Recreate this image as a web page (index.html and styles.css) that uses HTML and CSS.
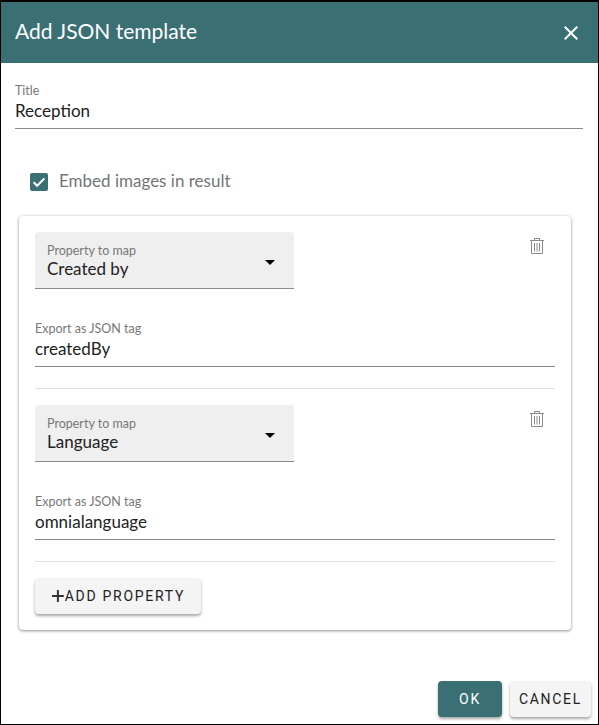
FILE: index.html
```html
<!DOCTYPE html>
<html lang="en">

<head>
  <meta charset="UTF-8">
  <title>Add JSON template</title>
  <link rel="stylesheet" href="styles.css">
</head>

<body>
  <div class="dialog">
    <div class="dialog-header">
      <span class="dialog-title">Add JSON template</span>
      <svg class="close-icon" viewBox="0 0 24 24" width="24" height="24">
        <path d="M19 6.41 17.59 5 12 10.59 6.41 5 5 6.41 10.59 12 5 17.59 6.41 19 12 13.41 17.59 19 19 17.59 13.41 12z" />
      </svg>
    </div>

    <div class="dialog-body">
      <div class="field title-field">
        <label>Title</label>
        <div class="value">Reception</div>
      </div>

      <div class="checkbox-row">
        <svg class="checkbox" viewBox="0 0 18 18" width="18" height="18">
          <rect width="18" height="18" rx="2" fill="#3a7074" />
          <path d="M3.6 9.2 7.2 12.8 14.4 5.4" fill="none" stroke="#fff" stroke-width="2" />
        </svg>
        <span>Embed images in result</span>
      </div>

      <div class="card">
        <div class="property">
          <div class="property-top">
            <div class="select">
              <div>
                <label>Property to map</label>
                <div class="value">Created by</div>
              </div>
              <span class="caret"></span>
            </div>
            <svg class="trash-icon" viewBox="0 0 16 18" width="16" height="18">
              <path d="M1 3.5H15M5.5 3.5V1.5H10.5V3.5M2.5 3.5V16.5H13.5V3.5M5.5 6V14.5M8 6V14.5M10.5 6V14.5" fill="none" stroke="#8a8a8a" stroke-width="1" />
            </svg>
          </div>
          <div class="field tag-field">
            <label>Export as JSON tag</label>
            <div class="value">createdBy</div>
          </div>
        </div>

        <div class="property">
          <div class="property-top">
            <div class="select">
              <div>
                <label>Property to map</label>
                <div class="value">Language</div>
              </div>
              <span class="caret"></span>
            </div>
            <svg class="trash-icon" viewBox="0 0 16 18" width="16" height="18">
              <path d="M1 3.5H15M5.5 3.5V1.5H10.5V3.5M2.5 3.5V16.5H13.5V3.5M5.5 6V14.5M8 6V14.5M10.5 6V14.5" fill="none" stroke="#8a8a8a" stroke-width="1" />
            </svg>
          </div>
          <div class="field tag-field">
            <label>Export as JSON tag</label>
            <div class="value">omnialanguage</div>
          </div>
        </div>

        <button class="btn btn-add">
          <svg viewBox="0 0 14 14" width="14" height="14">
            <path d="M1 7H13M7 1V13" fill="none" stroke="#333" stroke-width="2" />
          </svg>
          ADD PROPERTY
        </button>
      </div>
    </div>

    <div class="dialog-footer">
      <button class="btn btn-ok">OK</button>
      <button class="btn btn-cancel">CANCEL</button>
    </div>
  </div>
</body>

</html>
```

FILE: styles.css
```css
html,
body {
  margin: 0;
  height: 100%;
}

body {
  font-family: Lato, "Open Sans", sans-serif;
  color: #222;
  background-color: #fff;
}

.dialog {
  box-sizing: border-box;
  height: 725px;
  display: flex;
  flex-direction: column;
  border: 1px solid #000;
  border-top-width: 2px;
  overflow: hidden;
}

.dialog-header {
  display: flex;
  align-items: center;
  justify-content: space-between;
  height: 61px;
  padding: 0 15px 0 14px;
  background-color: #3a7074;
  color: #fff;
}

.dialog-title {
  font-size: 21px;
  line-height: 28px;
  margin-top: -3px;
}

.close-icon {
  fill: #fff;
}

.dialog-body {
  flex: 1;
  padding: 0 15px 0 14px;
}

label {
  display: block;
  font-size: 12.5px;
  line-height: 14px;
  color: #777;
}

.value {
  font-size: 17px;
  line-height: 26px;
  color: #222;
}

.select .value {
  line-height: 22px;
}

.field {
  border-bottom: 1px solid #8c8c8c;
}

.title-field {
  margin-top: 21px;
  padding-bottom: 4px;
}

.checkbox-row {
  display: flex;
  align-items: center;
  gap: 11px;
  margin: 44px 0 0 15px;
  height: 18px;
  font-size: 17px;
  line-height: 18px;
  color: #757575;
}

.checkbox-row span {
  margin-top: -2px;
}

.card {
  margin: 25px 12px 0 4px;
  padding: 16px;
  background-color: #fff;
  border-radius: 4px;
  box-shadow: 0 1px 3px rgba(0, 0, 0, 0.4), 0 0 4px rgba(0, 0, 0, 0.08);
}

.property {
  margin-bottom: 16px;
  padding-bottom: 21px;
  border-bottom: 1px solid #e0e0e0;
}

.property-top {
  display: flex;
  justify-content: space-between;
  align-items: flex-start;
}

.select {
  box-sizing: border-box;
  width: 259px;
  height: 57px;
  display: flex;
  align-items: center;
  justify-content: space-between;
  padding: 4px 19px 0 12px;
  background-color: #efefef;
  border-radius: 4px 4px 0 0;
  border-bottom: 1px solid #8c8c8c;
}

.caret {
  width: 0;
  height: 0;
  border-left: 5px solid transparent;
  border-right: 5px solid transparent;
  border-top: 5px solid #000;
}

.trash-icon {
  margin: 5px 10px 0 0;
}

.tag-field {
  margin-top: 33px;
  padding-bottom: 4px;
}

.btn {
  font-family: Roboto, sans-serif;
  font-size: 14px;
  font-weight: 400;
  letter-spacing: 1.7px;
  height: 36px;
  border: none;
  border-radius: 4px;
  box-shadow: 0 2px 3px rgba(0, 0, 0, 0.35);
  white-space: nowrap;
}

.btn-add {
  display: flex;
  align-items: center;
  width: 166px;
  padding: 0 16px;
  background-color: #f4f4f4;
  color: #222;
}

.dialog-footer {
  display: flex;
  justify-content: flex-end;
  gap: 8px;
  padding: 0 7px 7px 0;
}

.btn-ok {
  width: 64px;
  padding: 0;
  background-color: #3a7074;
  color: #fff;
}

.btn-cancel {
  width: 81px;
  padding: 0;
  background-color: #f4f4f4;
  color: #222;
}
```
